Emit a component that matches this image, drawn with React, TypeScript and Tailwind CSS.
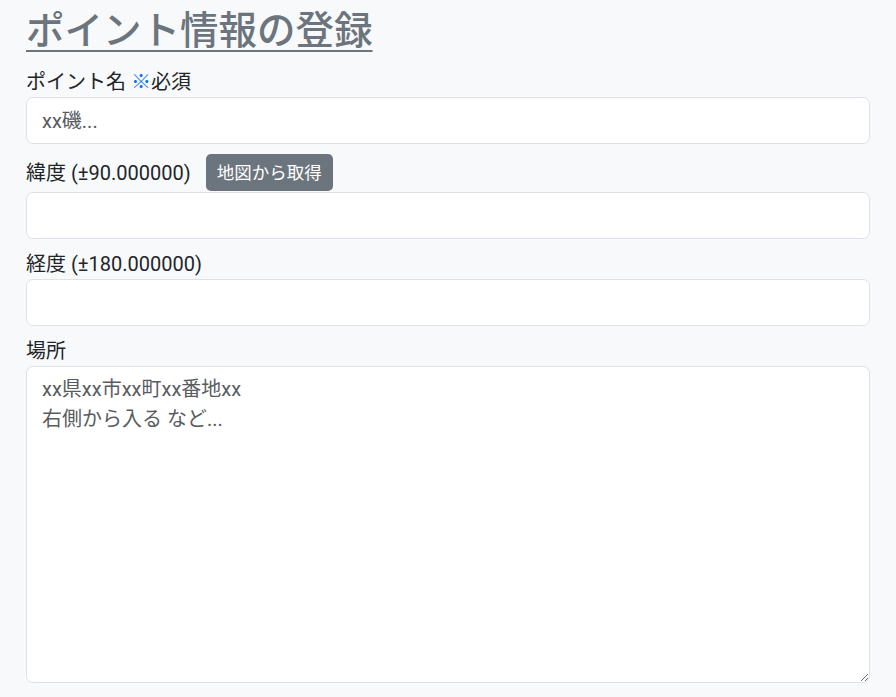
import React from "react";

const font = { fontFamily: 'Roboto, "Noto Sans CJK JP", sans-serif' };

export default function App() {
  return (
    <div className="min-h-[697px] bg-[#f8f9fa] text-[#212529] px-[26px] pt-[8px]" style={font}>
      <h1 className="text-[38.5px] leading-[1.2] font-medium text-[#6c757d] underline decoration-[2px] underline-offset-[6px] mb-[13px]">
        ポイント情報の登録
      </h1>
      <form className="flex flex-col">
        <label className="text-[20px] leading-[30px]">
          ポイント名 <span className="text-[#0d6efd]">※</span>必須
        </label>
        <input
          className="h-[47px] w-full rounded-[7px] border border-[#dee2e6] bg-white px-[15px] text-[20px] outline-none placeholder:text-[#595c5f]"
          placeholder="xx磯..."
        />
        <div className="mt-[10px] flex items-center gap-[15px]">
          <label className="text-[20px] leading-[30px]">緯度 (±90.000000)</label>
          <button
            type="button"
            className="h-[37px] rounded-[5px] bg-[#6c757d] px-[11px] text-[17.5px] text-white"
          >
            地図から取得
          </button>
        </div>
        <input className="mt-px h-[47px] w-full rounded-[7px] border border-[#dee2e6] bg-white px-[15px] text-[20px] outline-none" />
        <label className="mt-[10px] text-[20px] leading-[30px]">経度 (±180.000000)</label>
        <input className="h-[47px] w-full rounded-[7px] border border-[#dee2e6] bg-white px-[15px] text-[20px] outline-none" />
        <label className="mt-[10px] text-[20px] leading-[30px]">場所</label>
        <textarea
          className="h-[317px] w-full rounded-[7px] border border-[#dee2e6] bg-white px-[15px] py-[7px] text-[20px] leading-[30px] outline-none placeholder:text-[#595c5f]"
          placeholder={"xx県xx市xx町xx番地xx\n右側から入る など..."}
        />
      </form>
    </div>
  );
}
